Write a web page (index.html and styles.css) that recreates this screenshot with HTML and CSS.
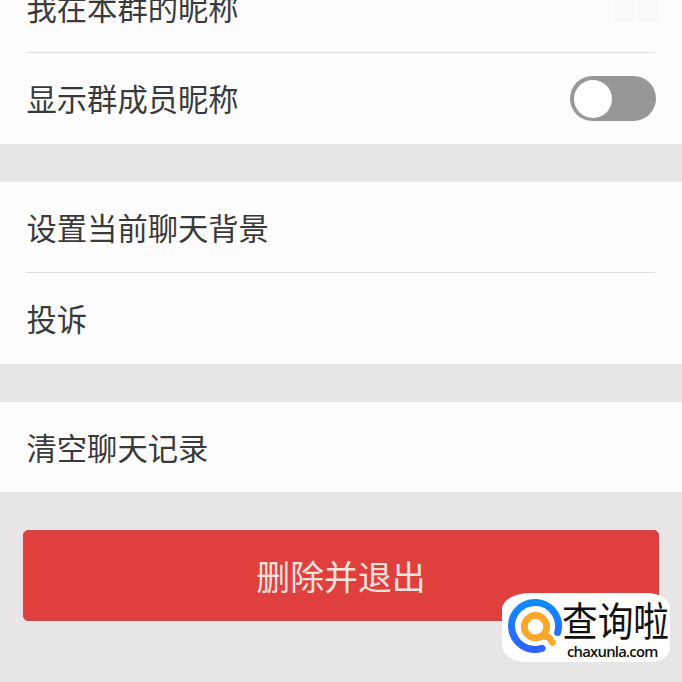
FILE: index.html
```html
<!DOCTYPE html>
<html lang="zh-CN">
<head>
<meta charset="utf-8">
<title>群聊设置</title>
<link rel="stylesheet" href="styles.css">
</head>
<body>
<main class="screen">
  <section class="group">
    <div class="row row-clipped"><span class="label">我在本群的昵称</span><span class="nickname"><i></i><i></i></span></div>
    <div class="row"><span class="label">显示群成员昵称</span><span class="switch" role="switch" aria-checked="false"></span></div>
  </section>
  <section class="group">
    <div class="row"><span class="label">设置当前聊天背景</span></div>
    <div class="row"><span class="label">投诉</span></div>
  </section>
  <section class="group">
    <div class="row"><span class="label">清空聊天记录</span></div>
  </section>
  <button class="leave">删除并退出</button>
  <aside class="brand">
    <svg class="brand-mark" viewBox="0 0 56 56" width="56" height="56">
      <defs>
        <linearGradient id="ring" x1="0" y1="0" x2="0" y2="1"><stop offset="0" stop-color="#118bfa"/><stop offset="1" stop-color="#2d62fb"/></linearGradient>
      </defs>
      <path d="M35 50.4A23.5 23.5 0 1 1 50.6 34.5" fill="none" stroke="url(#ring)" stroke-width="7" stroke-linecap="round"/>
      <circle cx="28.5" cy="28.7" r="11.2" fill="none" stroke="#f9a72c" stroke-width="6.8"/>
      <path d="M36.5 38.5L41.5 39L45.5 44.5" fill="none" stroke="#f9a72c" stroke-width="6.6" stroke-linecap="round" stroke-linejoin="round"/>
    </svg>
    <div class="brand-copy"><span class="brand-name">查询啦</span><span class="brand-url">chaxunla.com</span></div>
  </aside>
</main>
</body>
</html>
```
FILE: styles.css
```css
* { box-sizing: border-box; }
body {
  margin: 0;
  background: #e7e5e6;
  font-family: "Noto Sans CJK SC", sans-serif;
}
.screen {
  position: relative;
  height: 682px;
  overflow: hidden;
  display: flex;
  flex-direction: column;
}
.group {
  background: #fdfdfd;
  padding: 0 27px 0 26px;
  margin-bottom: 38px;
}
.row {
  height: 90px;
  display: flex;
  align-items: center;
  justify-content: space-between;
}
.row + .row { border-top: 1px solid #dedede; height: 92px; }
.row-clipped { height: 52px; align-items: flex-end; padding-bottom: 21px; }
.label {
  font-size: 30.3px;
  line-height: 44px;
  padding-bottom: 2px;
  margin-left: 0.5px;
  color: #3a3a3a;
  white-space: nowrap;
}
.row:first-child:not(.row-clipped) .label { padding-bottom: 0; }
.nickname { display: flex; align-self: flex-start; margin-right: -4px; gap: 2px; }
.nickname i { width: 21px; height: 22px; background: #f9f9f9; }
.switch {
  width: 86px;
  height: 45px;
  padding: 4px;
  margin-right: -1px;
  border-radius: 23px;
  background: #979797;
}
.switch::before {
  content: "";
  display: block;
  width: 38px;
  height: 38px;
  border-radius: 50%;
  background: #fff;
}
.leave {
  margin: 0 23px;
  height: 91px;
  flex: none;
  border: 1px solid #cb4646;
  border-radius: 5px;
  background: #df403e;
  color: #fbe3dd;
  font: 400 33.9px/50px "Noto Sans CJK SC", sans-serif;
  padding: 1px 0 0;
}
.brand {
  position: absolute;
  left: 502px;
  top: 593px;
  width: 168px;
  height: 69px;
  padding: 5px 0 0 5px;
  background: #fff;
  border-radius: 28px 24px 20px 24px / 16px 14px 14px 16px;
  display: flex;
}
.brand-mark { flex: none; }
.brand-copy { display: flex; flex-direction: column; margin-left: -1px; }
.brand-name {
  font-size: 35.7px;
  line-height: 42px;
  height: 42px;
  color: #111;
  white-space: nowrap;
  transform: scaleY(1.12);
}
.brand-url {
  margin: 1px 0 0 5px;
  font: 600 14.8px/20px "Open Sans", sans-serif;
  letter-spacing: -0.75px;
  color: #111;
}
```
